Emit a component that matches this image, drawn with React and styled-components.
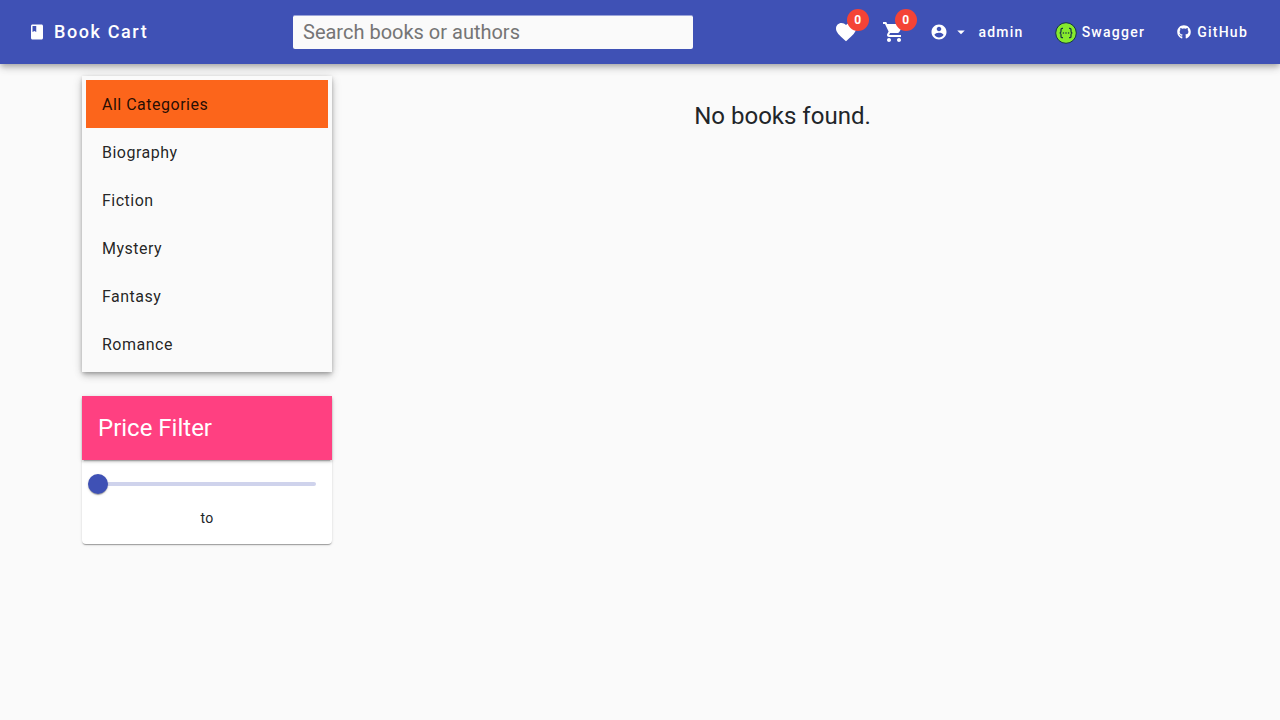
import React from "react";
import styled, { createGlobalStyle } from "styled-components";
import { FaGithub } from "react-icons/fa";

const GlobalStyle = createGlobalStyle`
  * { box-sizing: border-box; }
  html, body, #root { height: 100%; }
  body {
    margin: 0;
    background: #fafafa;
    color: #212529;
    font-family: Roboto, "Liberation Sans", sans-serif;
    -webkit-font-smoothing: antialiased;
  }
`;

const Toolbar = styled.header`
  position: relative;
  z-index: 1;
  display: flex;
  align-items: center;
  height: 64px;
  padding: 0 16px;
  background: #3f51b5;
  color: #fff;
  box-shadow: 0 3px 5px -1px rgba(0, 0, 0, 0.2), 0 5px 8px rgba(0, 0, 0, 0.1),
    0 1px 10px rgba(0, 0, 0, 0.12);
`;

const NavButton = styled.button`
  display: flex;
  align-items: center;
  flex: none;
  gap: ${(p) => p.$gap}px;
  height: 36px;
  margin: 0 0 0 ${(p) => p.$before}px;
  padding: 0;
  border: 0;
  background: none;
  color: #fff;
  font: 500 ${(p) => p.$size || 14}px/20px Roboto, sans-serif;
  letter-spacing: 0.0892857em;
  white-space: nowrap;
`;

const Icon = styled.svg`
  display: block;
  flex: none;
  width: ${(p) => p.$size}px;
  height: ${(p) => p.$size}px;
  margin-top: ${(p) => p.$drop || 0}px;
  fill: currentColor;
`;

const GitHubMark = styled(FaGithub)`
  flex: none;
  width: 14px;
  height: 14px;
  margin-bottom: 1px;
`;

const Brand = styled.div`
  display: flex;
  flex: none;
  width: 277px;
`;

const Search = styled.input`
  width: 400px;
  height: 34px;
  padding: 0 10px 1px;
  border: 0;
  border-top: 1px solid #9ba4d9;
  border-radius: 2px;
  background: #fafafa;
  color: #212529;
  font: 400 20px/24px Roboto, sans-serif;
  outline: 0;
  &::placeholder { color: #757575; opacity: 1; }
`;

const Actions = styled.nav`
  display: flex;
  align-items: center;
  margin-left: auto;
  padding-right: 16px;
`;

const BadgeHolder = styled.span`
  position: relative;
  display: block;
  margin-right: 24px;
`;

const Badge = styled.span`
  position: absolute;
  top: -11px;
  left: 13px;
  width: 22px;
  height: 22px;
  border-radius: 50%;
  background: #f44336;
  color: #fff;
  font: 700 12px/22px Roboto, sans-serif;
  text-align: center;
`;

const Page = styled.main`
  display: flex;
  padding: 12px 82px 0;
`;

const Sidebar = styled.aside`
  display: flex;
  flex-direction: column;
  flex: none;
  gap: 24px;
  width: 250px;
`;

const CategoryList = styled.div`
  padding: 4px;
  background: #fafafa;
  box-shadow: 0 3px 5px -1px rgba(0, 0, 0, 0.2), 0 5px 8px rgba(0, 0, 0, 0.1),
    0 1px 10px rgba(0, 0, 0, 0.12), 0 1px 3px rgba(0, 0, 0, 0.12);
`;

const Category = styled.a`
  display: flex;
  align-items: center;
  height: 48px;
  padding: 0 16px;
  background: ${(p) => (p.$active ? "#fc651b" : "transparent")};
  color: rgba(0, 0, 0, 0.87);
  font-size: 16px;
  letter-spacing: 0.5px;
`;

const FilterCard = styled.section`
  border-radius: 4px;
  background: #fff;
  box-shadow: 0 2px 1px -1px rgba(0, 0, 0, 0.2), 0 1px 1px rgba(0, 0, 0, 0.14),
    0 1px 3px rgba(0, 0, 0, 0.12);
`;

const FilterTitle = styled.h2`
  height: 64px;
  margin: 0;
  padding: 0 16px;
  background: #ff4081;
  color: #fff;
  font-size: 24px;
  font-weight: 400;
  line-height: 64px;
  box-shadow: 0 3px 1px -2px rgba(0, 0, 0, 0.2), 0 2px 2px rgba(0, 0, 0, 0.14),
    0 1px 5px rgba(0, 0, 0, 0.12);
`;

const SliderArea = styled.div`
  display: flex;
  align-items: center;
  height: 48px;
  padding: 0 16px;
`;

const Track = styled.div`
  position: relative;
  width: 100%;
  height: 4px;
  border-radius: 2px;
  background: #cfd3ec;
`;

const Thumb = styled.span`
  position: absolute;
  top: -8px;
  left: -10px;
  width: 20px;
  height: 20px;
  border-radius: 50%;
  background: #3f51b5;
  box-shadow: 0 2px 1px -1px rgba(0, 0, 0, 0.2), 0 1px 1px rgba(0, 0, 0, 0.14),
    0 1px 3px rgba(0, 0, 0, 0.12);
`;

const Range = styled.p`
  height: 36px;
  margin: 0;
  font-size: 14px;
  line-height: 20px;
  letter-spacing: 0.25px;
  text-align: center;
`;

const Results = styled.section`
  flex: 1;
  padding: 24px 0 0 35px;
  text-align: center;
`;

const Message = styled.h1`
  margin: 0;
  font-size: 24px;
  font-weight: 400;
  line-height: 32px;
`;

const ICONS = {
  book: "M18 2H6c-1.1 0-2 .9-2 2v16c0 1.1.9 2 2 2h12c1.1 0 2-.9 2-2V4c0-1.1-.9-2-2-2zM6 4h5v8l-2.5-1.5L6 12V4z",
  heart:
    "M12 21.35l-1.45-1.32C5.4 15.36 2 12.28 2 8.5 2 5.42 4.42 3 7.5 3c1.74 0 3.41.81 4.5 2.09C13.09 3.81 14.76 3 16.5 3 19.58 3 22 5.42 22 8.5c0 3.78-3.4 6.86-8.55 11.54L12 21.35z",
  cart: "M7 18c-1.1 0-1.99.9-1.99 2S5.9 22 7 22s2-.9 2-2-.9-2-2-2zM1 2v2h2l3.6 7.59-1.35 2.45c-.16.28-.25.61-.25.96 0 1.1.9 2 2 2h12v-2H7.42c-.14 0-.25-.11-.25-.25l.03-.12.9-1.63h7.45c.75 0 1.41-.41 1.75-1.03l3.58-6.49c.08-.14.12-.31.12-.48 0-.55-.45-1-1-1H5.21l-.94-2H1zm16 16c-1.1 0-1.99.9-1.99 2s.89 2 1.99 2 2-.9 2-2-.9-2-2-2z",
  account:
    "M12 2C6.48 2 2 6.48 2 12s4.48 10 10 10 10-4.48 10-10S17.52 2 12 2zm0 3c1.66 0 3 1.34 3 3s-1.34 3-3 3-3-1.34-3-3 1.34-3 3-3zm0 14.2c-2.5 0-4.71-1.28-6-3.22.03-1.99 4-3.08 6-3.08 1.99 0 5.97 1.09 6 3.08-1.29 1.94-3.5 3.22-6 3.22z",
  caret: "M7 10l5 5 5-5z",
};

function Glyph({ name, size }) {
  return (
    <Icon $size={size} viewBox="0 0 24 24">
      <path d={ICONS[name]} />
    </Icon>
  );
}

function SwaggerLogo() {
  return (
    <Icon $size={22} $drop={2} viewBox="0 0 22 22">
      <circle cx="11" cy="11" r="10.3" fill="#85ea2d" stroke="#173647" strokeWidth="1" />
      <g fill="none" stroke="#173647" strokeWidth="1.25">
        <path d="M8 6.3H7.2Q6 6.3 6 7.6V9.3Q6 10.9 4.6 11Q6 11.1 6 12.7V14.4Q6 15.7 7.2 15.7H8" />
        <path d="M14 6.3h.8Q16 6.3 16 7.6V9.3Q16 10.9 17.4 11Q16 11.1 16 12.7V14.4Q16 15.7 14.8 15.7H14" />
      </g>
      <g fill="#173647">
        <circle cx="8.4" cy="11" r=".8" />
        <circle cx="11" cy="11" r=".8" />
        <circle cx="13.6" cy="11" r=".8" />
      </g>
    </Icon>
  );
}

const categories = ["All Categories", "Biography", "Fiction", "Mystery", "Fantasy", "Romance"];

export default function App() {
  return (
    <>
      <GlobalStyle />
      <Toolbar>
        <Brand>
          <NavButton $before={12} $gap={8} $size={18}>
            <Glyph name="book" size={18} />
            Book Cart
          </NavButton>
        </Brand>
        <Search placeholder="Search books or authors" />
        <Actions>
          <BadgeHolder>
            <Glyph name="heart" size={24} />
            <Badge>0</Badge>
          </BadgeHolder>
          <BadgeHolder>
            <Glyph name="cart" size={24} />
            <Badge>0</Badge>
          </BadgeHolder>
          <NavButton $before={0} $gap={4}>
            <Glyph name="account" size={18} />
            <Glyph name="caret" size={18} />
            <span>&nbsp;admin</span>
          </NavButton>
          <NavButton $before={31} $gap={5}>
            <SwaggerLogo />
            Swagger
          </NavButton>
          <NavButton $before={32} $gap={6}>
            <GitHubMark />
            GitHub
          </NavButton>
        </Actions>
      </Toolbar>
      <Page>
        <Sidebar>
          <CategoryList>
            {categories.map((name, i) => (
              <Category key={name} $active={i === 0}>{name}</Category>
            ))}
          </CategoryList>
          <FilterCard>
            <FilterTitle>Price Filter</FilterTitle>
            <SliderArea>
              <Track>
                <Thumb />
              </Track>
            </SliderArea>
            <Range>to</Range>
          </FilterCard>
        </Sidebar>
        <Results>
          <Message>No books found.</Message>
        </Results>
      </Page>
    </>
  );
}
